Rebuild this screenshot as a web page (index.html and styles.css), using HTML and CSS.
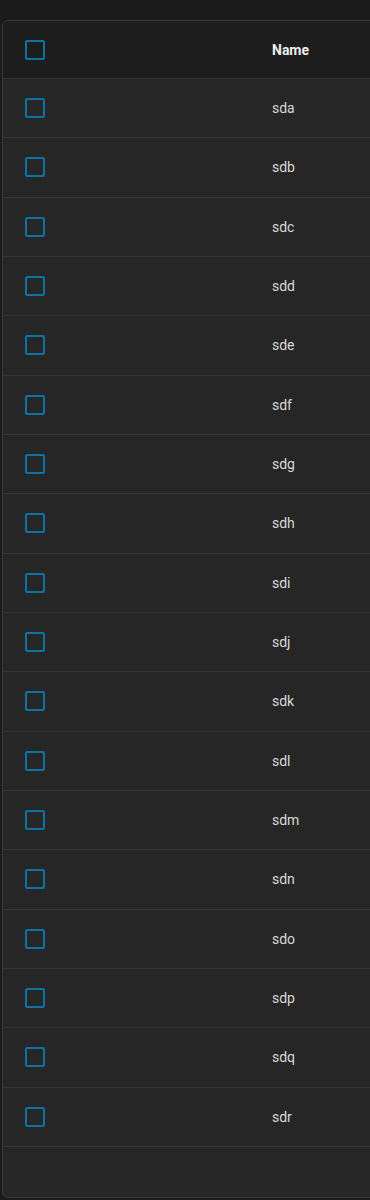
FILE: index.html
```html
<!DOCTYPE html>
<html lang="en">
<head>
    <meta charset="UTF-8">
    <meta name="viewport" content="width=device-width, initial-scale=1.0">
    <title>Disks</title>
    <link rel="stylesheet" href="styles.css">
</head>
<body>
    <!-- Disk table -->
    <div class="card">
        <div class="row head">
            <div class="cell check"><span class="box"></span></div>
            <div class="cell name">Name</div>
        </div>
        <div class="row"><div class="cell check"><span class="box"></span></div><div class="cell name">sda</div></div>
        <div class="row"><div class="cell check"><span class="box"></span></div><div class="cell name">sdb</div></div>
        <div class="row"><div class="cell check"><span class="box"></span></div><div class="cell name">sdc</div></div>
        <div class="row"><div class="cell check"><span class="box"></span></div><div class="cell name">sdd</div></div>
        <div class="row"><div class="cell check"><span class="box"></span></div><div class="cell name">sde</div></div>
        <div class="row"><div class="cell check"><span class="box"></span></div><div class="cell name">sdf</div></div>
        <div class="row"><div class="cell check"><span class="box"></span></div><div class="cell name">sdg</div></div>
        <div class="row"><div class="cell check"><span class="box"></span></div><div class="cell name">sdh</div></div>
        <div class="row"><div class="cell check"><span class="box"></span></div><div class="cell name">sdi</div></div>
        <div class="row"><div class="cell check"><span class="box"></span></div><div class="cell name">sdj</div></div>
        <div class="row"><div class="cell check"><span class="box"></span></div><div class="cell name">sdk</div></div>
        <div class="row"><div class="cell check"><span class="box"></span></div><div class="cell name">sdl</div></div>
        <div class="row"><div class="cell check"><span class="box"></span></div><div class="cell name">sdm</div></div>
        <div class="row"><div class="cell check"><span class="box"></span></div><div class="cell name">sdn</div></div>
        <div class="row"><div class="cell check"><span class="box"></span></div><div class="cell name">sdo</div></div>
        <div class="row"><div class="cell check"><span class="box"></span></div><div class="cell name">sdp</div></div>
        <div class="row"><div class="cell check"><span class="box"></span></div><div class="cell name">sdq</div></div>
        <div class="row"><div class="cell check"><span class="box"></span></div><div class="cell name">sdr</div></div>
        <div class="foot"></div>
    </div>
</body>
</html>
```

FILE: styles.css
```css
body {
    font-family: Roboto, "Liberation Sans", sans-serif;
    margin: 0;
    padding: 20px 0 0 2px;
    background-color: #1b1b1b;
    color: #dcdcdc;
}

.card {
    width: 380px;
    background-color: #262626;
    border: 1px solid #393939;
    border-radius: 6px;
    overflow: hidden;
}

.row {
    display: flex;
    align-items: center;
    height: 58.33px;
    border-bottom: 1px solid #363636;
}

.row.head {
    height: 57px;
    background-color: #1d1d1d;
    border-bottom-color: #333;
}

.cell.check {
    width: 269px;
    padding-left: 22px;
    box-sizing: border-box;
}

.box {
    display: block;
    width: 16px;
    height: 16px;
    border: 2px solid #0a72a4;
    border-radius: 2px;
}

.cell.name {
    font-size: 14px;
    color: #d8d8d8;
}

.head .name {
    font-weight: bold;
    font-size: 14px;
    color: #eeeeee;
}

.foot {
    height: 50px;
}
```
